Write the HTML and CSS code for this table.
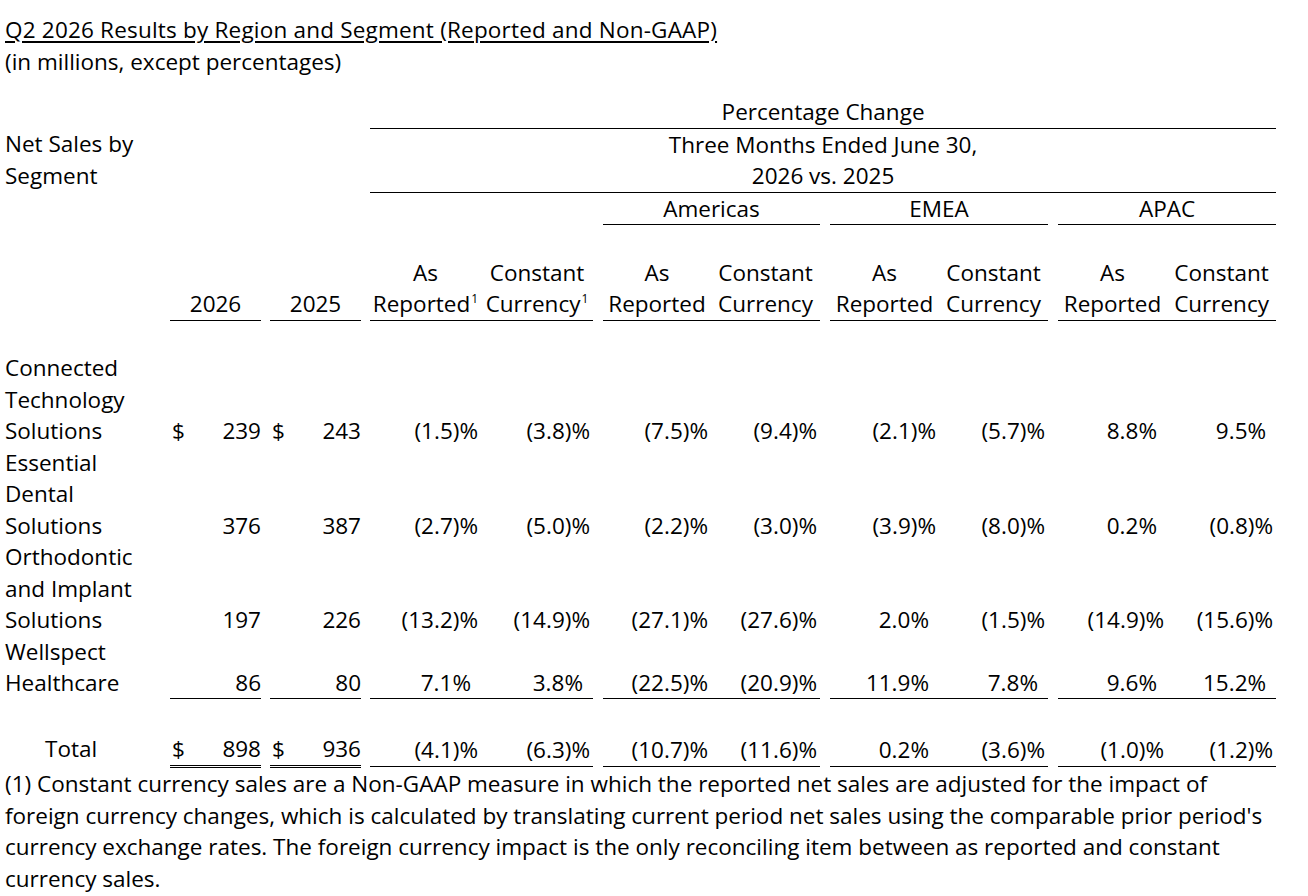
FILE: index.html
```html
<!DOCTYPE html>
<html lang="en">

<head>
    <meta charset="UTF-8">
    <meta name="viewport" content="width=device-width, initial-scale=1.0">
    <title>Q2 2026 Results by Region and Segment</title>
    <link rel="stylesheet" href="styles.css">
</head>

<body>
    <div class="page">
        <p class="title">Q2 2026 Results by Region and Segment (Reported and Non-GAAP)</p>
        <p class="sub">(in millions, except percentages)</p>

        <table class="results">
            <colgroup>
                <col class="w_label">
                <col class="w_sp">
                <col class="w_amt">
                <col class="w_sp">
                <col class="w_amt">
                <col class="w_sp">
                <col class="w_ar">
                <col class="w_cc">
                <col class="w_sp2">
                <col class="w_reg">
                <col class="w_reg2">
                <col class="w_sp2">
                <col class="w_reg3">
                <col class="w_reg3">
                <col class="w_sp2">
                <col class="w_reg3">
                <col class="w_reg3">
            </colgroup>
            <tr>
                <td></td>
                <td colspan="5"></td>
                <td colspan="11" class="head line">Percentage Change</td>
            </tr>
            <tr>
                <td class="label">Net Sales by Segment</td>
                <td colspan="5"></td>
                <td colspan="11" class="head line">Three Months Ended June 30,<br>2026 vs. 2025</td>
            </tr>
            <tr>
                <td></td>
                <td colspan="5"></td>
                <td colspan="2"></td>
                <td></td>
                <td colspan="2" class="head line">Americas</td>
                <td></td>
                <td colspan="2" class="head line">EMEA</td>
                <td></td>
                <td colspan="2" class="head line">APAC</td>
            </tr>
            <tr class="blank">
                <td colspan="17">&nbsp;</td>
            </tr>
            <tr class="colhead">
                <td></td>
                <td></td>
                <td class="head line">2026</td>
                <td></td>
                <td class="head line">2025</td>
                <td></td>
                <td class="head line">As Reported<sup>1</sup></td>
                <td class="head line">Constant Currency<sup>1</sup></td>
                <td></td>
                <td class="head line">As Reported</td>
                <td class="head line">Constant Currency</td>
                <td></td>
                <td class="head line">As Reported</td>
                <td class="head line">Constant Currency</td>
                <td></td>
                <td class="head line">As Reported</td>
                <td class="head line">Constant Currency</td>
            </tr>
            <tr class="blank">
                <td colspan="17">&nbsp;</td>
            </tr>
            <tr class="data">
                <td class="label">Connected Technology Solutions</td>
                <td></td>
                <td><div class="amt"><span>$</span><span>239</span></div></td>
                <td></td>
                <td><div class="amt"><span>$</span><span>243</span></div></td>
                <td></td>
                <td class="num">(1.5)%</td>
                <td class="num">(3.8)%</td>
                <td></td>
                <td class="num">(7.5)%</td>
                <td class="num">(9.4)%</td>
                <td></td>
                <td class="num">(2.1)%</td>
                <td class="num">(5.7)%</td>
                <td></td>
                <td class="num pos">8.8%</td>
                <td class="num pos">9.5%</td>
            </tr>
            <tr class="data">
                <td class="label">Essential Dental Solutions</td>
                <td></td>
                <td><div class="amt"><span></span><span>376</span></div></td>
                <td></td>
                <td><div class="amt"><span></span><span>387</span></div></td>
                <td></td>
                <td class="num">(2.7)%</td>
                <td class="num">(5.0)%</td>
                <td></td>
                <td class="num">(2.2)%</td>
                <td class="num">(3.0)%</td>
                <td></td>
                <td class="num">(3.9)%</td>
                <td class="num">(8.0)%</td>
                <td></td>
                <td class="num pos">0.2%</td>
                <td class="num">(0.8)%</td>
            </tr>
            <tr class="data">
                <td class="label">Orthodontic and Implant Solutions</td>
                <td></td>
                <td><div class="amt"><span></span><span>197</span></div></td>
                <td></td>
                <td><div class="amt"><span></span><span>226</span></div></td>
                <td></td>
                <td class="num">(13.2)%</td>
                <td class="num">(14.9)%</td>
                <td></td>
                <td class="num">(27.1)%</td>
                <td class="num">(27.6)%</td>
                <td></td>
                <td class="num pos">2.0%</td>
                <td class="num">(1.5)%</td>
                <td></td>
                <td class="num">(14.9)%</td>
                <td class="num">(15.6)%</td>
            </tr>
            <tr class="data">
                <td class="label">Wellspect Healthcare</td>
                <td></td>
                <td class="line"><div class="amt"><span></span><span>86</span></div></td>
                <td></td>
                <td class="line"><div class="amt"><span></span><span>80</span></div></td>
                <td></td>
                <td class="num pos line">7.1%</td>
                <td class="num pos line">3.8%</td>
                <td></td>
                <td class="num line">(22.5)%</td>
                <td class="num line">(20.9)%</td>
                <td></td>
                <td class="num pos line">11.9%</td>
                <td class="num pos line">7.8%</td>
                <td></td>
                <td class="num pos line">9.6%</td>
                <td class="num pos line">15.2%</td>
            </tr>
            <tr class="blank tall">
                <td colspan="17">&nbsp;</td>
            </tr>
            <tr class="data total_row">
                <td class="label total">Total</td>
                <td></td>
                <td class="dline"><div class="amt"><span>$</span><span>898</span></div></td>
                <td></td>
                <td class="dline"><div class="amt"><span>$</span><span>936</span></div></td>
                <td></td>
                <td class="num line">(4.1)%</td>
                <td class="num line">(6.3)%</td>
                <td></td>
                <td class="num line">(10.7)%</td>
                <td class="num line">(11.6)%</td>
                <td></td>
                <td class="num pos line">0.2%</td>
                <td class="num line">(3.6)%</td>
                <td></td>
                <td class="num line">(1.0)%</td>
                <td class="num line">(1.2)%</td>
            </tr>
        </table>

        <p class="note">(1) Constant currency sales are a Non-GAAP measure in which the reported net sales are adjusted for the impact of foreign currency changes, which is calculated by translating current period net sales using the comparable prior period's currency exchange rates. The foreign currency impact is the only reconciling item between as reported and constant currency sales.</p>
    </div>
</body>

</html>
```

FILE: styles.css
```css
body {
    margin: 0;
    background-color: white;
    color: #000;
    font-family: "Open Sans", "Noto Sans", sans-serif;
    font-size: 22.5px;
    line-height: 31.5px;
}

.page {
    padding: 14px 0 0 5px;
    width: 1280px;
}

p {
    margin: 0;
}

.title {
    text-decoration: underline;
    text-underline-offset: 3px;
    letter-spacing: 0.2px;
}

.results {
    margin-top: 19px;
    border-collapse: collapse;
    table-layout: fixed;
    width: 1271px;
}

.results td {
    padding: 0;
    vertical-align: bottom;
}

.w_label {
    width: 156px;
}

.w_sp {
    width: 9px;
}

.w_sp2 {
    width: 10px;
}

.w_amt {
    width: 91px;
}

.w_ar {
    width: 111px;
}

.w_cc {
    width: 112px;
}

.w_reg {
    width: 108px;
}

.w_reg2 {
    width: 109px;
}

.w_reg3 {
    width: 109px;
}

.head {
    text-align: center;
}

.line {
    border-bottom: 1px solid #000;
}

.dline {
    border-bottom: 3px double #000;
}

sup {
    font-size: 12px;
    line-height: 0;
    vertical-align: 9px;
    margin-left: 1px;
}

.label {
    text-align: left;
    vertical-align: top !important;
}

.tall td {
    padding-top: 2px;
}

.total_row td {
    padding-bottom: 1px;
}

.total {
    padding-left: 40px !important;
}

.amt {
    display: flex;
    justify-content: space-between;
    padding-left: 2px;
}

.num {
    text-align: right;
    padding-right: 3px !important;
}

.num.pos {
    padding-right: 10px !important;
}

.note {
    margin-top: 0;
}
```
